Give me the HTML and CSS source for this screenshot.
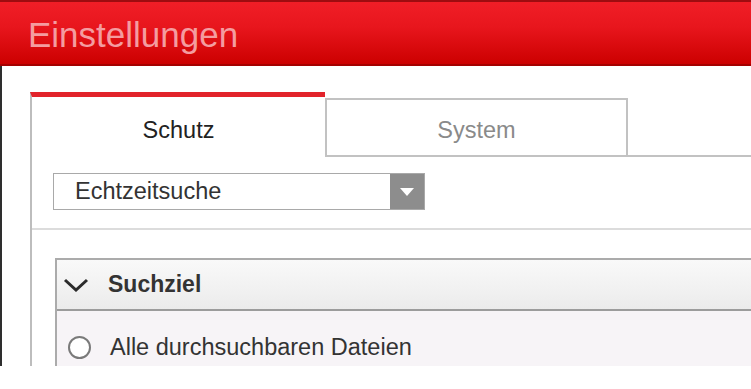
FILE: index.html
```html
<!DOCTYPE html>
<html lang="de">
<head>
<meta charset="utf-8">
<title>Einstellungen</title>
<link rel="stylesheet" href="styles.css">
</head>
<body>
<div class="window">
  <header class="titlebar">
    <h1 class="title">Einstellungen</h1>
  </header>
  <div class="content">
    <div class="tabs">
      <div class="tab tab-active">Schutz</div>
      <div class="tab tab-inactive">System</div>
      <div class="tab-fill"></div>
    </div>
    <div class="panel">
      <div class="select-row">
        <div class="select">
          <span class="select-text">Echtzeitsuche</span>
          <span class="select-btn">
            <svg width="14" height="8" viewBox="0 0 14 8"><path d="M0 0 L14 0 L7 8 Z" fill="#ffffff"/></svg>
          </span>
        </div>
      </div>
      <div class="section">
        <div class="section-head">
          <svg class="chevron" width="26" height="14" viewBox="0 0 26 14"><path d="M2 2 L13 12 L24 2" fill="none" stroke="#2b2b2b" stroke-width="3"/></svg>
          <span class="section-title">Suchziel</span>
        </div>
        <div class="option">
          <span class="radio"></span>
          <span class="option-text">Alle durchsuchbaren Dateien</span>
        </div>
      </div>
    </div>
  </div>
</div>
</body>
</html>
```

FILE: styles.css
```css
html, body {
  margin: 0;
  padding: 0;
  background: #ffffff;
}

body {
  font-family: "Liberation Sans", Arial, sans-serif;
}

.window {
  width: 751px;
  height: 366px;
  overflow: hidden;
  display: flex;
  flex-direction: column;
}

.titlebar {
  box-sizing: border-box;
  height: 66px;
  border-top: 2px solid #9e0c10;
  border-bottom: 2px solid #a50000;
  background: linear-gradient(to bottom, #f01e27 0%, #e8161d 40%, #cc0000 100%);
  padding: 13px 0 0 28px;
  flex: none;
}

.title {
  margin: 0;
  font-weight: normal;
  font-size: 35px;
  line-height: 40px;
  color: #f49ca0;
}

.content {
  flex: 1;
  border-left: 2px solid #2e2e2e;
  padding: 26px 0 0 28px;
  display: flex;
  flex-direction: column;
}

.tabs {
  display: flex;
  align-items: flex-end;
  flex: none;
}

.tab {
  box-sizing: border-box;
  font-size: 23.5px;
  line-height: 27px;
  text-align: center;
}

.tab-active {
  width: 295px;
  height: 65px;
  border-top: 5px solid #e2232b;
  border-left: 2px solid #bdbdbd;
  padding-top: 20px;
  color: #222222;
}

.tab-inactive {
  width: 303px;
  height: 59px;
  border: 2px solid #c2c2c2;
  padding-top: 17px;
  color: #8a8a8a;
}

.tab-fill {
  flex: 1;
  border-bottom: 2px solid #c2c2c2;
}

.panel {
  flex: 1;
  border-left: 2px solid #bdbdbd;
  display: flex;
  flex-direction: column;
}

.select-row {
  padding: 16px 0 18px 21px;
  border-bottom: 2px solid #dcdcdc;
}

.select {
  box-sizing: border-box;
  width: 372px;
  height: 37px;
  border: 1px solid #a9a9a9;
  display: flex;
  align-items: stretch;
}

.select-text {
  flex: 1;
  display: flex;
  align-items: center;
  padding-left: 21px;
  font-size: 23.5px;
  line-height: 27px;
  color: #333333;
}

.select-btn {
  width: 34px;
  background: #8d8d8d;
  display: flex;
  align-items: center;
  justify-content: center;
}

.section {
  margin: 28px 0 0 23px;
  border-top: 2px solid #ababab;
  border-left: 2px solid #ababab;
  flex: 1;
  display: flex;
  flex-direction: column;
}

.section-head {
  box-sizing: border-box;
  height: 51px;
  border-bottom: 2px solid #9c9c9c;
  background: linear-gradient(to bottom, #f9f9f9 0%, #f1f1f1 60%, #ebebeb 100%);
  display: flex;
  align-items: center;
  padding-left: 6px;
}

.chevron {
  margin-right: 19px;
  margin-top: 1px;
}

.section-title {
  font-weight: bold;
  font-size: 23px;
  line-height: 27px;
  color: #333333;
}

.option {
  flex: 1;
  background: #f7f4f7;
  display: flex;
  align-items: flex-start;
  padding: 23px 0 0 11px;
}

.radio {
  box-sizing: border-box;
  width: 23px;
  height: 23px;
  border: 2px solid #7a7a7a;
  border-radius: 50%;
  background: #ffffff;
  margin-top: 2px;
  margin-right: 19px;
}

.option-text {
  font-size: 23.5px;
  line-height: 27px;
  color: #333333;
}
```
